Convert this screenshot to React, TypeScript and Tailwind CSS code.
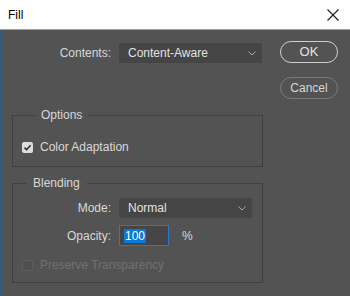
import { useState } from 'react';

function Chevron() {
    return (
        <svg width="8" height="5" viewBox="0 0 8 5" className="text-[#a8a8a8]">
            <path d="M0.5 0.5 L4 4 L7.5 0.5" fill="none" stroke="currentColor" strokeWidth="1" />
        </svg>
    );
}

function Select({ value, width }: { value: string; width: string }) {
    return (
        <div className={`${width} h-[20px] bg-[#454545] rounded-[2px] flex items-center justify-between pl-[9px] pr-[6px] text-[#e2e2e2]`}>
            <span>{value}</span>
            <Chevron />
        </div>
    );
}

export default function App() {
    const [adapt, setAdapt] = useState(true);

    return (
        <div className="w-[350px] h-[296px] flex flex-col bg-[#535353] text-[12px] leading-[14px] text-[#d8d8d8] font-['Liberation_Sans',sans-serif] overflow-hidden select-none">

            {/* Title bar */}
            <div className="h-[30px] shrink-0 bg-white flex items-center justify-between pl-[8px] pr-[11px] border-b border-[#a3a3a3] text-black">
                <span className="text-[12px]">Fill</span>
                <svg width="12" height="12" viewBox="0 0 12 12">
                    <path d="M0.5 0.5 L11.5 11.5 M11.5 0.5 L0.5 11.5" stroke="#1a1a1a" strokeWidth="1.1" />
                </svg>
            </div>

            <div className="flex-1 flex border-l border-[#2f5f88]">

                {/* Left column */}
                <div className="w-[251px] ml-[11px] flex flex-col">

                    <div className="mt-[13px] flex items-center h-[20px]">
                        <span className="w-[99px] text-right">Contents:</span>
                        <div className="ml-[8px]">
                            <Select value="Content-Aware" width="w-[143px]" />
                        </div>
                    </div>

                    <fieldset className="mt-[45px] border border-[#404040] pt-[18px] pb-[12px] pl-[9px]">
                        <legend className="ml-[13px] px-[6px] leading-[14px]">Options</legend>
                        <label className="flex items-center h-[14px] gap-[7px] cursor-default" onClick={() => setAdapt(!adapt)}>
                            <span className="w-[11px] h-[11px] rounded-[2px] bg-[#dcdcdc] flex items-center justify-center">
                                {adapt && (
                                    <svg width="9" height="9" viewBox="0 0 9 9">
                                        <path d="M1.5 4.6 L3.6 6.7 L7.6 2.2" fill="none" stroke="#2a2a2a" strokeWidth="1.6" />
                                    </svg>
                                )}
                            </span>
                            <span>Color Adaptation</span>
                        </label>
                    </fieldset>

                    <fieldset className="mt-[9px] border border-[#404040] pt-[8px] pb-[10px]">
                        <legend className="ml-[13px] px-[7px] leading-[14px]">Blending</legend>

                        <div className="flex items-center h-[20px]">
                            <span className="w-[98px] text-right">Mode:</span>
                            <div className="ml-[8px]">
                                <Select value="Normal" width="w-[133px]" />
                            </div>
                        </div>

                        <div className="mt-[7px] flex items-center h-[21px]">
                            <span className="w-[98px] text-right">Opacity:</span>
                            <div className="ml-[8px] w-[50px] h-[21px] border border-[#2a78cc] bg-[#454545] flex items-center pl-[4px]">
                                <span className="bg-[#0a78d7] text-white px-[1px]">100</span>
                            </div>
                            <span className="ml-[13px]">%</span>
                        </div>

                        <div className="mt-[12px] flex items-center h-[14px] gap-[7px] pl-[9px] text-[#717171]">
                            <span className="w-[11px] h-[11px] rounded-[2px] border border-[#5e5e5e] bg-[#4f4f4f]" />
                            <span>Preserve Transparency</span>
                        </div>
                    </fieldset>
                </div>

                {/* Buttons */}
                <div className="ml-[17px] mt-[11px] flex flex-col gap-[14px]">
                    <button className="w-[58px] h-[22px] rounded-full border-[1.5px] border-[#cfcfcf] text-[13px] text-[#e4e4e4] flex items-center justify-center">
                        OK
                    </button>
                    <button className="w-[58px] h-[22px] rounded-full border border-[#7a7a7a] text-[12px] text-[#d6d6d6] flex items-center justify-center">
                        Cancel
                    </button>
                </div>
            </div>
        </div>
    );
}
